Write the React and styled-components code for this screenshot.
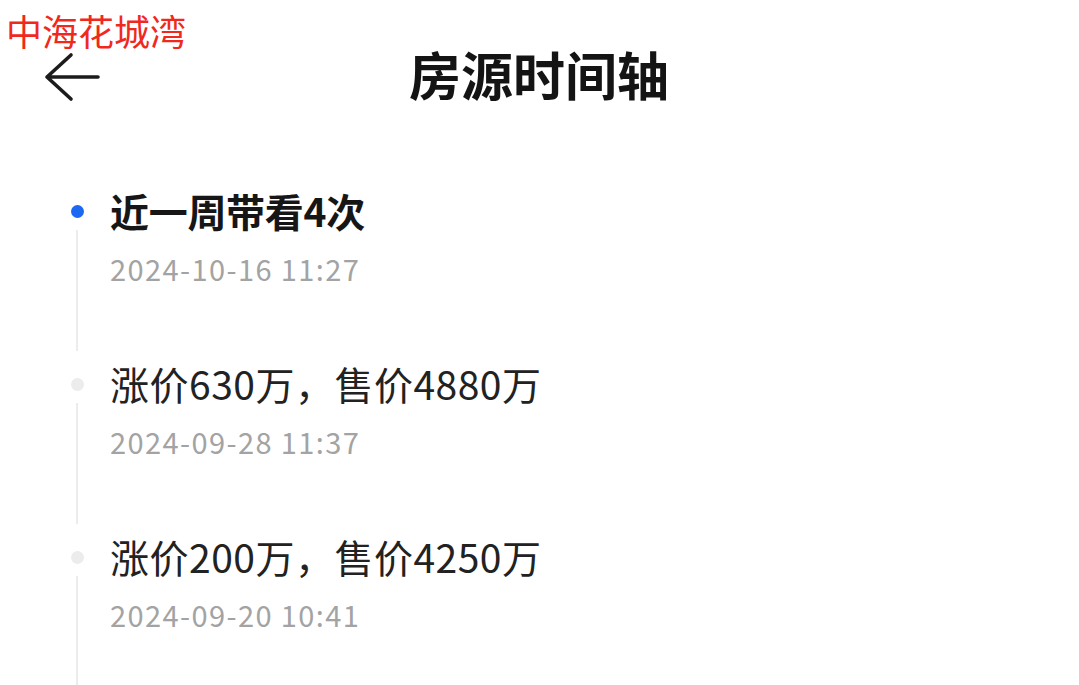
import React from 'react';
import styled, {createGlobalStyle} from 'styled-components';

const GlobalStyle = createGlobalStyle`
  body {
    margin: 0;
    background: #ffffff;
    font-family: "Noto Sans CJK SC", "Noto Sans", sans-serif;
  }
`;

const Page = styled.div`
  position: relative;
  width: 1079px;
  height: 685px;
  overflow: hidden;
  background: #ffffff;
`;

const Watermark = styled.div`
  position: absolute;
  top: 8px;
  left: 6px;
  font-size: 36px;
  line-height: 44px;
  color: #f0281e;
`;

const NavBar = styled.header`
  display: grid;
  grid-template-columns: 1fr auto 1fr;
  align-items: center;
  height: 80px;
  margin-top: 37px;
  padding-left: 43px;
`;

const BackButton = styled.button`
  display: flex;
  align-items: center;
  justify-self: start;
  padding: 0;
  border: 0;
  background: none;
  color: #1c1c1c;
`;

const Title = styled.h1`
  margin: 0 0 6px;
  font-size: 52px;
  line-height: 1;
  font-weight: 700;
  color: #141414;
  transform: translateX(-22px);
`;

const Timeline = styled.ul`
  list-style: none;
  margin: 68px 0 0;
  padding: 0 0 0 71px;
`;

const Item = styled.li`
  display: grid;
  grid-template-columns: 12px 1fr;
  column-gap: 27px;
  height: 173px;
`;

const Rail = styled.div`
  display: flex;
  flex-direction: column;
  align-items: center;
`;

const Dot = styled.span`
  width: 13px;
  height: 13px;
  margin-top: 20px;
  border-radius: 50%;
  background: ${({$active}) => ($active ? '#1d68f0' : '#ececec')};
`;

const Line = styled.span`
  width: 2px;
  height: 121px;
  margin-top: 12px;
  background: #ececec;
`;

const Content = styled.div`
  display: flex;
  flex-direction: column;
`;

const EventTitle = styled.div`
  font-size: 39px;
  line-height: 50px;
  letter-spacing: ${({$active}) => ($active ? '-0.3px' : '0.5px')};
  font-weight: ${({$active}) => ($active ? 700 : 400)};
  color: ${({$active}) => ($active ? '#161616' : '#222222')};
`;

const EventTime = styled.div`
  margin-top: 13px;
  font-size: 29px;
  line-height: 40px;
  letter-spacing: 1.4px;
  color: #a3a3a3;
`;

const ArrowLeft = () => (
  <svg width="58" height="50" viewBox="0 0 58 50" fill="none">
    <path d="M55 25H4M28 3L4 25L28 47" stroke="currentColor" strokeWidth="3.6"
          strokeLinecap="round" strokeLinejoin="round"/>
  </svg>
);

const events = [
  {title: '近一周带看4次', time: '2024-10-16 11:27', active: true},
  {title: '涨价630万，售价4880万', time: '2024-09-28 11:37'},
  {title: '涨价200万，售价4250万', time: '2024-09-20 10:41'},
];

const App = () => (
  <Page>
    <GlobalStyle/>
    <Watermark>中海花城湾</Watermark>
    <NavBar>
      <BackButton aria-label="返回"><ArrowLeft/></BackButton>
      <Title>房源时间轴</Title>
      <span/>
    </NavBar>
    <Timeline>
      {events.map((ev) => (
        <Item key={ev.time}>
          <Rail>
            <Dot $active={ev.active}/>
            <Line/>
          </Rail>
          <Content>
            <EventTitle $active={ev.active}>{ev.title}</EventTitle>
            <EventTime>{ev.time}</EventTime>
          </Content>
        </Item>
      ))}
    </Timeline>
  </Page>
);

export default App;
